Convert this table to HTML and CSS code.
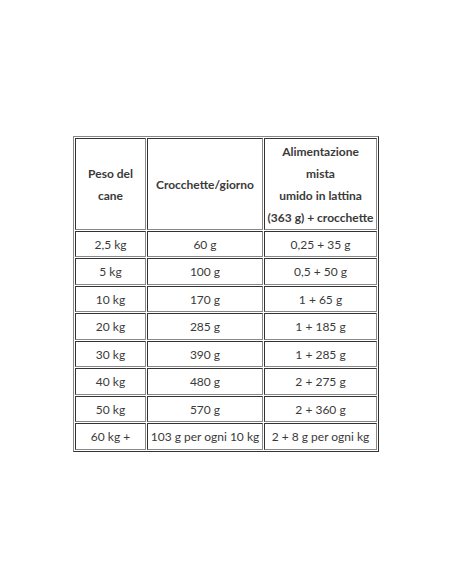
FILE: index.html
```html
<!DOCTYPE html>
<html>
<head>
<meta charset="utf-8">
<link rel="stylesheet" href="styles.css">
</head>
<body>
<div class="page">
<table class="feed">
<thead>
<tr>
<th class="c1">Peso del<br>cane</th>
<th class="c2">Crocchette/giorno</th>
<th class="c3">Alimentazione<br>mista<br>umido in lattina<br>(363 g) + crocchette</th>
</tr>
</thead>
<tbody>
<tr><td>2,5 kg</td><td>60 g</td><td>0,25 + 35 g</td></tr>
<tr><td>5 kg</td><td>100 g</td><td>0,5 + 50 g</td></tr>
<tr><td>10 kg</td><td>170 g</td><td>1 + 65 g</td></tr>
<tr><td>20 kg</td><td>285 g</td><td>1 + 185 g</td></tr>
<tr><td>30 kg</td><td>390 g</td><td>1 + 285 g</td></tr>
<tr><td>40 kg</td><td>480 g</td><td>2 + 275 g</td></tr>
<tr><td>50 kg</td><td>570 g</td><td>2 + 360 g</td></tr>
<tr><td>60 kg +</td><td>103 g per ogni 10 kg</td><td>2 + 8 g per ogni kg</td></tr>
</tbody>
</table>
</div>
</body>
</html>
```
FILE: styles.css
```css
html, body {
  margin: 0;
  padding: 0;
  background: #ffffff;
}
.page {
  padding-top: 136px;
}
.feed {
  margin: 0 auto;
  border-collapse: separate;
  border-spacing: 1px;
  border: 1px solid;
  border-color: #888888 #333333 #333333 #888888;
  font-family: "Lato", "Noto Sans", sans-serif;
  font-size: 12px;
  color: #3a3a3a;
}
.feed th, .feed td {
  border: 1px solid;
  border-color: #333333 #888888 #888888 #333333;
  text-align: center;
  padding: 2px 2px 0;
}
.feed th {
  font-weight: 700;
  line-height: 22px;
}
.feed td {
  line-height: 22.43px;
}
.c1 { width: 65px; }
.c2 { width: 110px; }
.c3 { width: 107px; }
```
